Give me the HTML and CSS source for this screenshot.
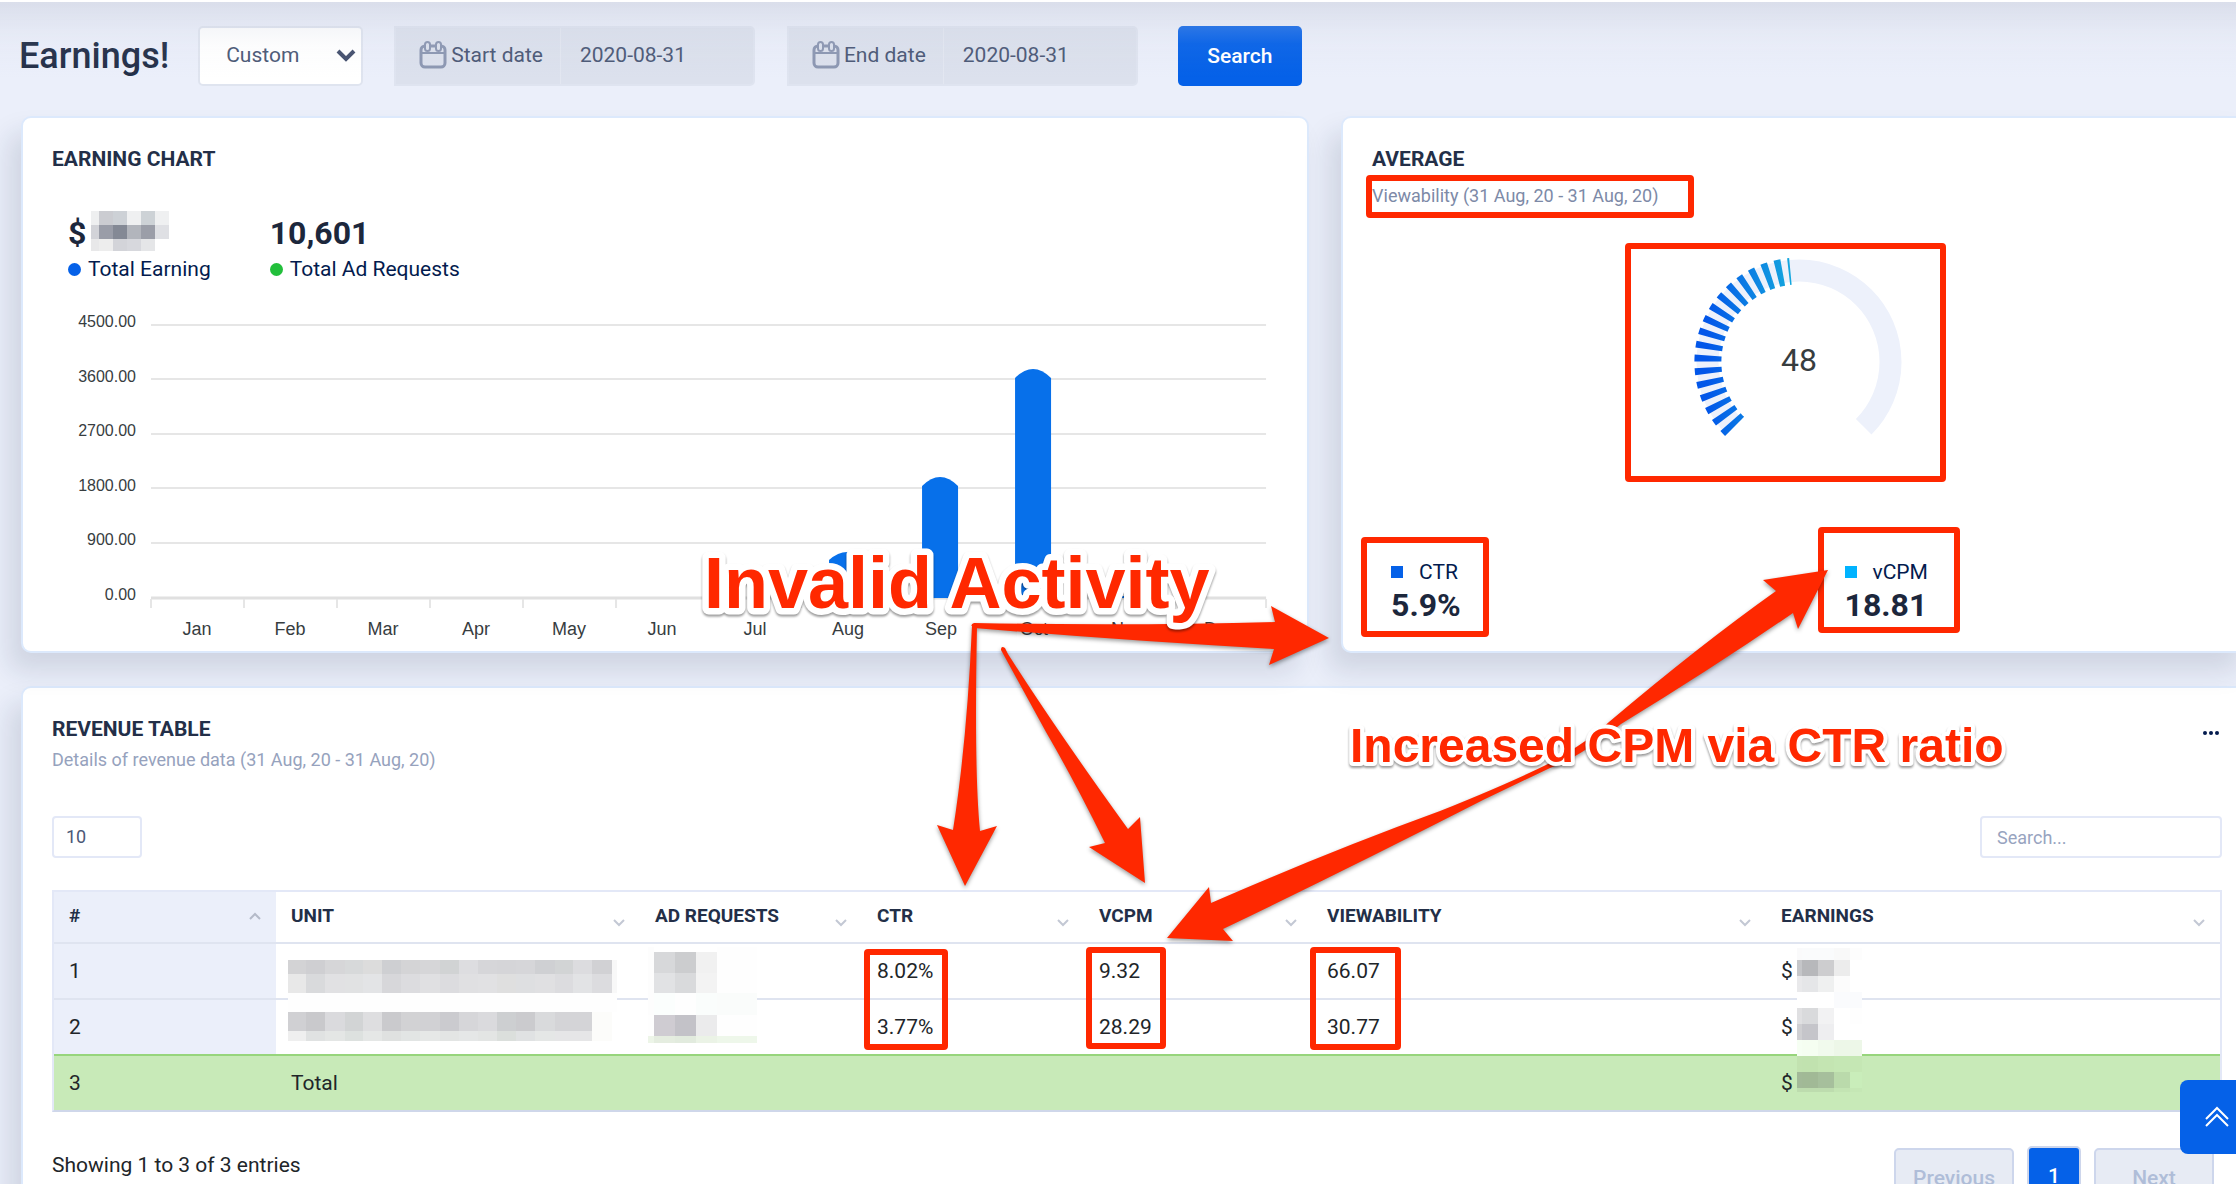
FILE: index.html
```html
<!DOCTYPE html>
<html lang="en">
<head>
    <meta charset="UTF-8">
    <meta name="viewport" content="width=device-width, initial-scale=1.0">
    <title>Earnings</title>
    <link rel="stylesheet" href="styles.css">
</head>
<body>
    <div class="topbar"></div>

    <main class="page">
        <form class="filters" onsubmit="return false">
            <h1>Earnings!</h1>
            <select class="range" aria-label="Date range">
                <option>Custom</option>
            </select>
            <div class="date-group">
                <label for="startDate">
                    <svg class="calendar" viewBox="0 0 28 28"><rect x="2" y="5" width="24" height="21" rx="4"/><path d="M2 12h24M11 5h6"/><rect class="ring" x="6" y="1" width="5" height="9" rx="2.5"/><rect class="ring" x="17" y="1" width="5" height="9" rx="2.5"/></svg>
                    Start date
                </label>
                <input type="text" id="startDate" value="2020-08-31">
            </div>
            <div class="date-group">
                <label for="endDate">
                    <svg class="calendar" viewBox="0 0 28 28"><rect x="2" y="5" width="24" height="21" rx="4"/><path d="M2 12h24M11 5h6"/><rect class="ring" x="6" y="1" width="5" height="9" rx="2.5"/><rect class="ring" x="17" y="1" width="5" height="9" rx="2.5"/></svg>
                    End date
                </label>
                <input type="text" id="endDate" value="2020-08-31">
            </div>
            <button type="submit" class="search-btn">Search</button>
        </form>

        <div class="grid">
            <section class="card chart-card">
                <h2>Earning Chart</h2>
                <div class="totals">
                    <div>
                        <div class="number">$</div>
                        <div class="legend"><i class="dot blue"></i>Total Earning</div>
                    </div>
                    <div>
                        <div class="number">10,601</div>
                        <div class="legend"><i class="dot green"></i>Total Ad Requests</div>
                    </div>
                </div>
                <svg class="chart" viewBox="0 0 1284 351">
                    <g class="gridlines">
                        <path d="M128 25H1243M128 79H1243M128 134H1243M128 188H1243M128 243H1243"/>
                        <path class="axis" d="M128 298H1243"/>
                        <path class="ticks" d="M128 299v9M221 299v9M314 299v9M407 299v9M500 299v9M593 299v9M686 299v9M778 299v9M871 299v9M964 299v9M1057 299v9M1150 299v9M1243 299v9"/>
                    </g>
                    <g class="bars">
                        <path d="M806 298V260Q824 244 842 260V298Z"/>
                        <path d="M899 298V186Q917 168 935 186V298Z"/>
                        <path d="M992 298V78Q1010 60 1028 78V298Z"/>
                        <path d="M1085 298v-2h36v2Z"/>
                    </g>
                    <g class="y-labels">
                        <text x="113" y="27">4500.00</text>
                        <text x="113" y="82">3600.00</text>
                        <text x="113" y="136">2700.00</text>
                        <text x="113" y="191">1800.00</text>
                        <text x="113" y="245">900.00</text>
                        <text x="113" y="300">0.00</text>
                    </g>
                    <g class="x-labels">
                        <text x="174" y="335">Jan</text>
                        <text x="267" y="335">Feb</text>
                        <text x="360" y="335">Mar</text>
                        <text x="453" y="335">Apr</text>
                        <text x="546" y="335">May</text>
                        <text x="639" y="335">Jun</text>
                        <text x="732" y="335">Jul</text>
                        <text x="825" y="335">Aug</text>
                        <text x="918" y="335">Sep</text>
                        <text x="1011" y="335">Oct</text>
                        <text x="1104" y="335">Nov</text>
                        <text x="1197" y="335">Dec</text>
                    </g>
                </svg>
            </section>

            <section class="card average-card">
                <h2>Average</h2>
                <p class="subtitle">Viewability (31 Aug, 20 - 31 Aug, 20)</p>
                <svg class="gauge" viewBox="0 0 320 240">
                    <defs>
                        <linearGradient id="gaugeFill" gradientUnits="userSpaceOnUse" x1="70" y1="0" x2="160" y2="0">
                            <stop offset="0" stop-color="#0256e9"/>
                            <stop offset="1" stop-color="#16addd"/>
                        </linearGradient>
                    </defs>
                    <path class="track" d="M97.3 176.7A91.5 91.5 0 1 1 226.7 176.7"/>
                    <path class="value" d="M97.6 176.4A91 91 0 0 1 153.4 21.4"/>
                    <text x="162" y="121">48</text>
                </svg>
                <div class="rates">
                    <div>
                        <div class="legend"><i class="square blue"></i>CTR</div>
                        <div class="number">5.9%</div>
                    </div>
                    <div>
                        <div class="legend"><i class="square cyan"></i>vCPM</div>
                        <div class="number">18.81</div>
                    </div>
                </div>
            </section>
        </div>

        <section class="card revenue-card">
            <div class="card-head">
                <div>
                    <h2>Revenue Table</h2>
                    <p class="subtitle">Details of revenue data (31 Aug, 20 - 31 Aug, 20)</p>
                </div>
                <button type="button" class="more" aria-label="More">
                    <svg viewBox="0 0 16 4"><circle cx="2" cy="2" r="2"/><circle cx="8" cy="2" r="2"/><circle cx="14" cy="2" r="2"/></svg>
                </button>
            </div>
            <div class="table-tools">
                <select class="length" aria-label="Rows per page">
                    <option>10</option>
                </select>
                <input type="search" placeholder="Search..." aria-label="Search table">
            </div>
            <table>
                <colgroup>
                    <col class="col-id"><col class="col-unit"><col class="col-req"><col class="col-req"><col class="col-cpm"><col class="col-wide"><col class="col-wide">
                </colgroup>
                <thead>
                    <tr>
                        <th class="asc">#</th>
                        <th>Unit</th>
                        <th>Ad Requests</th>
                        <th>CTR</th>
                        <th>vCPM</th>
                        <th>Viewability</th>
                        <th>Earnings</th>
                    </tr>
                </thead>
                <tbody>
                    <tr><td>1</td><td></td><td></td><td>8.02%</td><td>9.32</td><td>66.07</td><td>$</td></tr>
                    <tr><td>2</td><td></td><td></td><td>3.77%</td><td>28.29</td><td>30.77</td><td>$</td></tr>
                    <tr class="total"><td>3</td><td>Total</td><td></td><td></td><td></td><td></td><td>$</td></tr>
                </tbody>
            </table>
            <div class="table-foot">
                <div>Showing 1 to 3 of 3 entries</div>
                <nav class="pages">
                    <button type="button" disabled>Previous</button>
                    <button type="button" class="current">1</button>
                    <button type="button" disabled>Next</button>
                </nav>
            </div>
        </section>
    </main>

    <button type="button" class="to-top" aria-label="Back to top">
        <svg viewBox="0 0 24 22"><path d="M1 13L12 2L23 13M1 20L12 9L23 20"/></svg>
    </button>

    <!-- Hidden figures, arrows and notes drawn over the page -->
    <svg class="overlay" viewBox="0 0 2236 1184">
        <g id="mosaics" shape-rendering="crispEdges"></g>
        <g class="frames">
            <rect x="1369" y="178" width="322" height="37" rx="1"/>
            <rect x="1628" y="246" width="315" height="233" rx="1"/>
            <rect x="1364" y="540" width="122" height="94" rx="1"/>
            <rect x="1821" y="530" width="136" height="100" rx="1"/>
            <rect x="867" y="952" width="78" height="95" rx="1"/>
            <rect x="1089" y="950" width="74" height="96" rx="1"/>
            <rect x="1313" y="950" width="85" height="97" rx="1"/>
        </g>
        <g class="arrows">
            <path d="M974 623Q1130 626 1275 622L1271 606L1329 638L1269 665L1274 649Q1130 641 974 628Q969 625 974 623Z"/>
            <path d="M972 626Q970 624 977 626Q974 771 980 831L997 826L965 886L937 825L953 830Q967 741 972 626Z"/>
            <path d="M1001 650Q1001 645 1005 648L1008 654Q1055 728 1128 829L1140 817L1145 883L1089 847L1105 843Q1074 780 1046 732Z"/>
            <path d="M1167 938L1209 887L1211 903Q1330 851 1440 811Q1510 783 1552 762Q1590 740 1609 722Q1700 645 1776 591L1763 580L1828 570L1798 629L1793 613Q1710 670 1621 724Q1580 757 1550 768L1483 800Q1350 868 1223 929L1233 941Z"/>
        </g>
        <g class="notes">
            <text class="note-lg" x="704" y="608">Invalid Activity</text>
            <text class="note-md" x="1350" y="762">Increased CPM via CTR ratio</text>
        </g>
    </svg>

    <script>
        // each block: column edges, row edges, one row of colours per band
        const blocks = [
            { x: [91, 99, 113, 127, 141, 155, 169], y: [211, 225, 239, 251], c: [
                ['#eeeff0', '#cbccd1', '#cdd1d6', '#eff0f1', '#cdd2d6', '#eff0f1'],
                ['#d2d3d8', '#9a9da8', '#848995', '#b2b5bc', '#9b9ea8', '#dfe0e4'],
                ['#e8e8e9', '#ededed', '#d3d4d9', '#d7d8dd', '#e5e6e8', '#ffffff'] ] },
            { x: [288, 306, 325, 345, 363, 382, 401, 420, 440, 459, 478, 497, 516, 535, 555, 573, 592, 612, 617], y: [960, 974, 993, 1012, 1031, 1041], c: [
                ['#d3d3d5', '#cfcfd2', '#d6d6d8', '#d7d9da', '#dcdcdc', '#cecfd2', '#d4d4d6', '#d6d6d8', '#d1d3d4', '#dddde0', '#d6d6d9', '#d5d5d8', '#d6d6d9', '#cfd0d3', '#d2d4d5', '#dcdcdf', '#d1d1d4', '#f8f8f8'],
                ['#e8e8e8', '#d9dadc', '#e1e1e3', '#e1e2e3', '#e3e4e6', '#d7d7da', '#dcdcdf', '#e0e0e2', '#dcdcdf', '#e0e0e2', '#e1e1e3', '#dfdfdf', '#dedfe1', '#e0e0e2', '#dcdcdf', '#e2e3e5', '#dcdcdf', '#f8f8f8'],
                Array(18).fill('#fefefe'),
                ['#d0d0d3', '#c9c9cc', '#dadadd', '#d2d4d5', '#dedee0', '#cacacd', '#d2d2d4', '#d1d1d4', '#cbcbcf', '#d6d6d9', '#dadadd', '#cdcfd1', '#cbcbce', '#d9dadc', '#d4d4d7', '#d4d4d7', '#fcfcfa', '#ffffff'],
                ['#efefef', '#e0e2e2', '#e4e6e5', '#dde1df', '#e5e7e6', '#dfe1e0', '#e2e5e4', '#e6e8e7', '#e3e5e4', '#e5e7e7', '#e3e5e4', '#dbdfdc', '#e0e2e3', '#e5e7e6', '#e6e6e7', '#e6e6e7', '#fcfcfa', '#ffffff'] ] },
            { x: [648, 654, 675, 696, 717, 757], y: [947, 952, 973, 993, 1015, 1036, 1043], c: [
                ['#fdfdfd', '#ffffff', '#ffffff', '#ffffff', '#fefefe'],
                ['#fdfdfd', '#d7d8da', '#cccdcf', '#f1f1f1', '#fefefe'],
                ['#fdfdfd', '#e1e2e4', '#d9dadc', '#f3f3f3', '#fefefe'],
                ['#fdfdfd', '#fbfefd', '#fefefe', '#fafdfc', '#fafcfb'],
                ['#fefefe', '#cfccd2', '#c3c2c8', '#ebebec', '#fefefe'],
                ['#edf5e8', '#e5ede0', '#e2ebde', '#ebf3e6', '#eef7ea'] ] },
            { x: [1797, 1802, 1818, 1834, 1850, 1862], y: [948, 960, 976, 992, 1008, 1024, 1040, 1056, 1072, 1088, 1092], c: [
                ['#fafafb', '#fafbfc', '#fafbfc', '#f9f9f9', '#fdfdfd'],
                ['#c5c6c9', '#b7b8bb', '#cdcdcf', '#ececec', '#ffffff'],
                ['#e9e9eb', '#e5e6e8', '#eff0f0', '#fcfcfc', '#ffffff'],
                ['#ffffff', '#ffffff', '#ffffff', '#fafbfd', '#fafbfd'],
                ['#e0e0e2', '#d9dadc', '#f2f2f3', '#ffffff', '#fefefe'],
                ['#cfcfd2', '#c5c5ca', '#eeeef0', '#ffffff', '#ffffff'],
                ['#f6fff3', '#f5fef1', '#f1faed', '#edf7e8', '#edf7e8'],
                ['#c2e2b0', '#c1e2af', '#c4e5b2', '#c5e7b4', '#c5e7b4'],
                ['#a2b998', '#a1b996', '#a6bf9c', '#badaab', '#c9edba'],
                ['#bddcae', '#bddcae', '#bddcae', '#c3e4b3', '#c5e7b5'] ] }
        ];

        const mosaics = document.getElementById('mosaics');
        blocks.forEach(function(block) {
            block.c.forEach(function(row, r) {
                row.forEach(function(colour, i) {
                    const rect = document.createElementNS('http://www.w3.org/2000/svg', 'rect');
                    rect.setAttribute('x', block.x[i]);
                    rect.setAttribute('y', block.y[r]);
                    rect.setAttribute('width', block.x[i + 1] - block.x[i]);
                    rect.setAttribute('height', block.y[r + 1] - block.y[r]);
                    rect.setAttribute('fill', colour);
                    mosaics.appendChild(rect);
                });
            });
        });
    </script>
</body>
</html>
```
FILE: styles.css
```css
* { box-sizing: border-box; }
body {
    margin: 0;
    position: relative;
    height: 100vh;
    overflow: hidden;
    font-family: Roboto, "Liberation Sans", sans-serif;
    font-size: 21px;
    line-height: 28px;
    color: #212529;
    background: #ebeffa;
}
h1, h2, p { margin: 0; }
input, select, button { font: inherit; margin: 0; }

/* thin strip of the fixed header and the shadow it throws on the page */
.topbar { position: relative; z-index: 2; height: 2px; background: #fff; }
.topbar::after {
    content: "";
    position: absolute;
    top: 2px;
    left: 0;
    right: 0;
    height: 76px;
    pointer-events: none;
    background: linear-gradient(rgba(200,205,220,.5), rgba(200,205,220,.2) 32%, rgba(200,205,220,.06) 55%, rgba(200,205,220,0));
}

.page { padding-left: 21px; margin-right: -16px; }

.filters { display: flex; align-items: center; padding: 24px 0 30px; margin-left: -2px; }
h1 { font-size: 36px; line-height: 60px; font-weight: 500; color: #232f48; margin-right: 29px; }
.range {
    appearance: none;
    width: 165px;
    height: 60px;
    padding: 0 26px 2px;
    margin-right: 31px;
    border: 2px solid #dfe4ef;
    border-radius: 5px;
    color: #4b5876;
    background: #fff url("data:image/svg+xml,%3Csvg xmlns='http://www.w3.org/2000/svg' width='20' height='14' fill='none' stroke='%2344506e' stroke-width='4'%3E%3Cpath d='M2 2L10 10L18 2'/%3E%3C/svg%3E") no-repeat right 5px center;
}
.date-group {
    display: flex;
    height: 60px;
    margin-right: 32px;
    border: 2px solid #dfe4f0;
    border-radius: 0 5px 5px 0;
    background: #dce1ed;
    color: #4b5876;
}
.date-group label { display: flex; align-items: center; gap: 4px; padding: 0 17px 2px 23px; }
.date-group input {
    width: 193px;
    padding: 0 19px 2px;
    border: 0;
    border-left: 1px solid #e3e7f1;
    background: none;
    color: inherit;
}
.calendar { width: 28px; height: 28px; fill: none; stroke: #8c97b2; stroke-width: 3; }
.calendar path { stroke-width: 2; }
.calendar .ring { fill: #dce1ed; stroke-width: 2; }
.search-btn {
    width: 124px;
    height: 60px;
    padding-bottom: 2px;
    margin-left: 8px;
    border: 0;
    border-radius: 5px;
    background: #0561e8;
    color: #fff;
    font-weight: 500;
}

.card {
    border: 2px solid #dce9fc;
    border-radius: 10px;
    background: #fff;
    box-shadow: -12px 18px 27px rgba(25,42,70,.13);
}
h2 {
    font-size: 21px;
    line-height: 32px;
    font-weight: 700;
    text-transform: uppercase;
    color: #232f48;
}
.subtitle { font-size: 18px; color: #96a2bd; }

.grid { display: grid; grid-template-columns: repeat(12, 1fr); column-gap: 32px; margin-bottom: 33px; }
.chart-card { grid-column: span 7; padding-top: 25px; }
.chart-card h2 { margin-left: 29px; }
.average-card { grid-column: span 5; display: flex; flex-direction: column; padding: 25px 0 27px; }
.average-card h2, .average-card .subtitle { margin-left: 29px; }
.average-card .subtitle { margin-top: 7px; color: #7d8aa7; }

.totals { display: flex; gap: 59px; margin: 39px 0 0 45px; }
.number { font-size: 32px; line-height: 38px; font-weight: 700; color: #1c273c; }
.legend { display: flex; align-items: center; color: #031b4e; }
.totals .legend { margin-top: 3px; }
.dot { width: 13px; height: 13px; margin-right: 7px; border-radius: 50%; }
.square { width: 12px; height: 12px; margin-right: 16px; }
.blue { background: #0561e8; }
.green { background: #22bf3b; }
.cyan { background: #00b3ff; }

.chart { display: block; width: 100%; margin-top: 17px; font-family: "Liberation Sans", Arial, sans-serif; fill: #373d3f; }
.gridlines { fill: none; stroke: #e6e6e6; stroke-width: 2; }
.gridlines .axis { stroke: #e0e0e0; stroke-width: 3; }
.bars { fill: #0770ea; }
.y-labels { font-size: 16px; text-anchor: end; }
.x-labels { font-size: 18px; text-anchor: middle; }

.gauge { width: 320px; height: 240px; margin: 40px auto 0; }
.gauge .track { fill: none; stroke: #edf1fb; stroke-width: 22; }
.gauge .value { fill: none; stroke: url(#gaugeFill); stroke-width: 27; stroke-dasharray: 6 6; }
.gauge text { font-size: 32px; text-anchor: middle; fill: #373d3f; }
.rates { display: grid; grid-template-columns: 1fr 1fr; margin-top: auto; }
.rates > div { padding-left: 48px; }

.revenue-card { padding: 25px 28px 40px 29px; }
.card-head { display: flex; justify-content: space-between; align-items: center; }
.revenue-card .subtitle { margin-top: 1px; }
.more { padding: 0 3px; border: 0; background: none; line-height: 0; }
.more svg { width: 16px; height: 4px; fill: #031b4e; margin-bottom: 22px; }
.table-tools { display: flex; justify-content: space-between; margin: 42px 0 32px; }
.length, .table-tools input {
    appearance: none;
    height: 42px;
    border: 2px solid #e3e8f7;
    border-radius: 4px;
    background: #fff;
    font-size: 18px;
    color: #4b5876;
}
.length { width: 90px; padding: 0 12px; }
.table-tools input { width: 242px; padding: 0 15px; }
.table-tools input::placeholder { color: #98a4bf; }

table {
    width: 100%;
    table-layout: fixed;
    border-spacing: 0;
    border: 2px solid #e3e8f7;
    border-bottom-color: #cfd7ea;
}
.col-id { width: 222px; }
.col-unit { width: 364px; }
.col-req { width: 222px; }
.col-cpm { width: 228px; }
.col-wide { width: 21%; }
th, td { padding: 0 15px; text-align: left; border-bottom: 2px solid #dfe4f0; }
th {
    height: 52px;
    padding-bottom: 2px;
    font-size: 19px;
    font-weight: 700;
    text-transform: uppercase;
    color: #232f48;
    background: url("data:image/svg+xml,%3Csvg xmlns='http://www.w3.org/2000/svg' width='12' height='8' fill='none' stroke='%23c3c8d4' stroke-width='2'%3E%3Cpath d='M1 1L6 6L11 1'/%3E%3C/svg%3E") no-repeat right 15px top 27px;
}
th.asc { background-image: url("data:image/svg+xml,%3Csvg xmlns='http://www.w3.org/2000/svg' width='12' height='8' fill='none' stroke='%23b4bac8' stroke-width='2'%3E%3Cpath d='M1 7L6 2L11 7'/%3E%3C/svg%3E"); background-position: right 15px top 20px; }
td { height: 56px; }
th:first-child, td:first-child { background-color: #ebeffa; }
tbody tr:nth-child(2) td { border-bottom-color: #97d57c; }
.total td { height: 54px; background: #c8eab8; border-bottom: 0; }

.table-foot { display: flex; justify-content: space-between; align-items: flex-start; padding-top: 34px; }
.table-foot > div { padding-top: 5px; }
.pages { display: flex; gap: 13px; margin-right: 8px; }
.pages button {
    width: 120px;
    height: 60px;
    margin-top: 2px;
    border: 2px solid #cdd6ec;
    border-radius: 5px;
    background: #e7ebf4;
    color: #afbdd8;
    font-weight: 500;
}
.pages .current { width: 54px; margin-top: 0; background: #0561e8; color: #fff; }

.to-top {
    position: fixed;
    right: -18px;
    bottom: 30px;
    width: 74px;
    height: 74px;
    border: 0;
    border-radius: 8px;
    background: #0561e8;
}
.to-top svg { display: block; width: 24px; height: 22px; margin: 0 auto; fill: none; stroke: #fff; stroke-width: 2; }

.overlay { position: absolute; top: 0; left: 0; width: 100%; pointer-events: none; }
.frames { fill: none; stroke: #ff2800; stroke-width: 6; }
.arrows { fill: #ff2800; filter: drop-shadow(0 2px 2px rgba(0,0,0,.4)); }
.notes {
    font-family: "Liberation Sans", Arial, sans-serif;
    font-weight: 700;
    fill: #ff2800;
    stroke: #fff;
    stroke-linejoin: round;
    paint-order: stroke;
    filter: drop-shadow(0 2px 1px rgba(0,0,0,.4));
}
.note-lg { font-size: 72px; stroke-width: 13px; }
.note-md { font-size: 48px; stroke-width: 8px; }
```
